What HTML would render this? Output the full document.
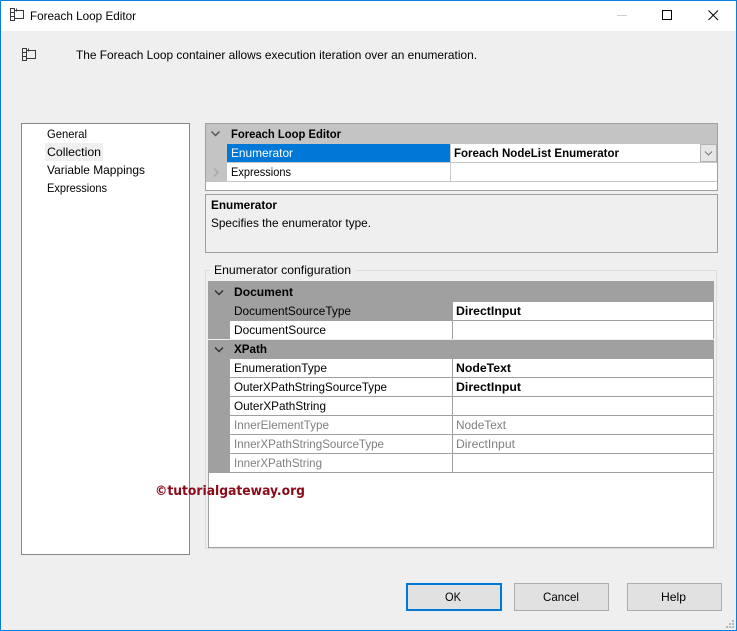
<!DOCTYPE html>
<html lang="en">
<head>
<meta charset="utf-8">
<title>Foreach Loop Editor</title>
<style>
html,body{margin:0;padding:0;width:737px;height:631px;overflow:hidden;background:#efefef}
svg{display:block;position:absolute;left:0;top:0}
text{font-family:"Liberation Sans",sans-serif;font-size:12px;fill:#000;white-space:pre}
.b{font-weight:bold}
.g{fill:#808080}
.w{fill:#fff}
.r{shape-rendering:crispEdges}
</style>
</head>
<body>
<svg width="737" height="631" viewBox="0 0 737 631" xmlns="http://www.w3.org/2000/svg">
<g class="r">
<rect width="737" height="631" fill="#efefef"/>
<rect x="0" y="0" width="737" height="31" fill="#fff"/>
<rect x="0" y="0" width="737" height="1" fill="#0a7fd9"/>
<rect x="0" y="0" width="1" height="631" fill="#0a7fd9"/>
<rect x="736" y="0" width="1" height="631" fill="#0a7fd9"/>
<rect x="0" y="630" width="737" height="1" fill="#0a7fd9"/>

<rect x="21.5" y="123.5" width="168" height="431" fill="#fff" stroke="#88888c"/>
<rect x="45" y="143" width="58" height="18" fill="#f0f0f0"/>

<rect x="205.5" y="123.5" width="512" height="67" fill="#fff" stroke="#a0a0a0"/>
<rect x="206" y="124" width="511" height="20" fill="#c4c4c4"/>
<rect x="206" y="144" width="21" height="38" fill="#c4c4c4"/>
<rect x="227" y="144" width="223" height="18" fill="#0078d7"/>
<rect x="227" y="162" width="490" height="1" fill="#c8c8c8"/>
<rect x="227" y="181" width="490" height="1" fill="#c8c8c8"/>
<rect x="450" y="144" width="1" height="38" fill="#c8c8c8"/>
<rect x="700.5" y="144.5" width="16" height="17" fill="#e6e6e6" stroke="#b4b4b4"/>

<rect x="205.5" y="194.5" width="512" height="58" fill="#efefef" stroke="#a0a0a0"/>

<rect x="205.5" y="270.5" width="511" height="278" fill="none" stroke="#dcdcdc"/>
<rect x="210" y="265" width="146" height="10" fill="#efefef"/>

<rect x="208.5" y="281.5" width="505" height="266" fill="#fff" stroke="#a0a0a0"/>
<rect x="208" y="281" width="506" height="21" fill="#a0a0a0"/>
<rect x="208" y="302" width="22" height="171" fill="#a0a0a0"/>
<rect x="230" y="302" width="223" height="18" fill="#a0a0a0"/>
<rect x="208" y="340" width="506" height="19" fill="#a0a0a0"/>
<rect x="208" y="339" width="506" height="1" fill="#efefef"/>
<rect x="230" y="320" width="484" height="1" fill="#a0a0a0"/>
<rect x="230" y="377" width="484" height="1" fill="#a0a0a0"/>
<rect x="230" y="396" width="484" height="1" fill="#a0a0a0"/>
<rect x="230" y="415" width="484" height="1" fill="#a0a0a0"/>
<rect x="230" y="434" width="484" height="1" fill="#a0a0a0"/>
<rect x="230" y="453" width="484" height="1" fill="#a0a0a0"/>
<rect x="230" y="472" width="484" height="1" fill="#a0a0a0"/>
<rect x="452" y="302" width="1" height="37" fill="#a0a0a0"/>
<rect x="452" y="359" width="1" height="114" fill="#a0a0a0"/>

<rect x="407" y="584" width="94" height="26" fill="#e1e1e1" stroke="#0078d7" stroke-width="2"/>
<rect x="514.5" y="583.5" width="94" height="27" fill="#e1e1e1" stroke="#adadad"/>
<rect x="627.5" y="583.5" width="94" height="27" fill="#e1e1e1" stroke="#adadad"/>

<rect x="617" y="15" width="10" height="1" fill="#cfcfcf"/>
<rect x="662.5" y="10.5" width="9" height="9" fill="none" stroke="#000"/>

<g fill="#b8b8b8">
<rect x="732" y="620" width="2" height="2"/>
<rect x="729" y="623" width="2" height="2"/><rect x="732" y="623" width="2" height="2"/>
<rect x="726" y="626" width="2" height="2"/><rect x="729" y="626" width="2" height="2"/><rect x="732" y="626" width="2" height="2"/>
</g>
</g>

<path d="M708.5 10.5L718 20M718 10.5L708.5 20" stroke="#000" fill="none" stroke-width="1"/>

<g fill="none" stroke="#3a3a3a" class="r">
<path d="M10.5 8.500h4v12h-4zM10.500 12.500h4M10.500 16.500h4M14.500 10.500h9v8h-9M16.500 8.500v3"/>
<path d="M22.500 48.500h4v12h-4zM22.500 52.500h4M22.500 56.500h4M26.500 50.500h9v8h-9M28.500 48.500v3"/>
</g>

<g fill="none">
<path d="M211.500 131.500L215.500 135.500L219.500 131.500" stroke="#555" stroke-width="1.500"/>
<path d="M214 168.500L218 172.500L214 176.500" stroke="#a8a8a8" stroke-width="1.500"/>
<path d="M215 290.500L219 294.500L223 290.500" stroke="#333" stroke-width="1.500"/>
<path d="M215 347.500L219 351.500L223 347.500" stroke="#333" stroke-width="1.500"/>
<path d="M705 151.500L708.500 155L712 151.500" stroke="#777" stroke-width="1"/>
</g>

<text x="30" y="20" textLength="106" lengthAdjust="spacingAndGlyphs">Foreach Loop Editor</text>
<text x="76" y="59" textLength="401" lengthAdjust="spacingAndGlyphs">The Foreach Loop container allows execution iteration over an enumeration.</text>

<text x="47" y="138" textLength="40" lengthAdjust="spacingAndGlyphs">General</text>
<text x="47" y="156" textLength="54" lengthAdjust="spacingAndGlyphs">Collection</text>
<text x="47" y="174" textLength="98" lengthAdjust="spacingAndGlyphs">Variable Mappings</text>
<text x="47" y="192" textLength="60" lengthAdjust="spacingAndGlyphs">Expressions</text>

<text class="b" x="231" y="138" textLength="110" lengthAdjust="spacingAndGlyphs">Foreach Loop Editor</text>
<text class="w" x="231" y="157" textLength="62" lengthAdjust="spacingAndGlyphs">Enumerator</text>
<text x="231" y="176" textLength="60" lengthAdjust="spacingAndGlyphs">Expressions</text>
<text class="b" x="454" y="157" textLength="165" lengthAdjust="spacingAndGlyphs">Foreach NodeList Enumerator</text>

<text class="b" x="211" y="209" textLength="66" lengthAdjust="spacingAndGlyphs">Enumerator</text>
<text x="211" y="227" textLength="160" lengthAdjust="spacingAndGlyphs">Specifies the enumerator type.</text>

<text x="214" y="274" textLength="137" lengthAdjust="spacingAndGlyphs">Enumerator configuration</text>

<text class="b" x="234" y="296" textLength="59" lengthAdjust="spacingAndGlyphs">Document</text>
<text x="234" y="315" textLength="117" lengthAdjust="spacingAndGlyphs">DocumentSourceType</text>
<text class="b" x="456" y="315" textLength="65" lengthAdjust="spacingAndGlyphs">DirectInput</text>
<text x="234" y="334" textLength="92" lengthAdjust="spacingAndGlyphs">DocumentSource</text>
<text class="b" x="234" y="353" textLength="33" lengthAdjust="spacingAndGlyphs">XPath</text>
<text x="234" y="372" textLength="93" lengthAdjust="spacingAndGlyphs">EnumerationType</text>
<text class="b" x="456" y="372" textLength="55" lengthAdjust="spacingAndGlyphs">NodeText</text>
<text x="234" y="391" textLength="153" lengthAdjust="spacingAndGlyphs">OuterXPathStringSourceType</text>
<text class="b" x="456" y="391" textLength="65" lengthAdjust="spacingAndGlyphs">DirectInput</text>
<text x="234" y="410" textLength="92" lengthAdjust="spacingAndGlyphs">OuterXPathString</text>
<text class="g" x="234" y="429" textLength="95" lengthAdjust="spacingAndGlyphs">InnerElementType</text>
<text class="g" x="456" y="429" textLength="50" lengthAdjust="spacingAndGlyphs">NodeText</text>
<text class="g" x="234" y="448" textLength="150" lengthAdjust="spacingAndGlyphs">InnerXPathStringSourceType</text>
<text class="g" x="456" y="448" textLength="59" lengthAdjust="spacingAndGlyphs">DirectInput</text>
<text class="g" x="234" y="467" textLength="88" lengthAdjust="spacingAndGlyphs">InnerXPathString</text>

<text x="445" y="601" textLength="16" lengthAdjust="spacingAndGlyphs">OK</text>
<text x="543" y="601" textLength="36" lengthAdjust="spacingAndGlyphs">Cancel</text>
<text x="661" y="601" textLength="25" lengthAdjust="spacingAndGlyphs">Help</text>

<text x="155" y="495" textLength="150" lengthAdjust="spacingAndGlyphs" style="font-family:'DejaVu Sans',sans-serif;font-weight:bold;font-size:13px;fill:#8b0a1a">©tutorialgateway.org</text>
</svg>
</body>
</html>
